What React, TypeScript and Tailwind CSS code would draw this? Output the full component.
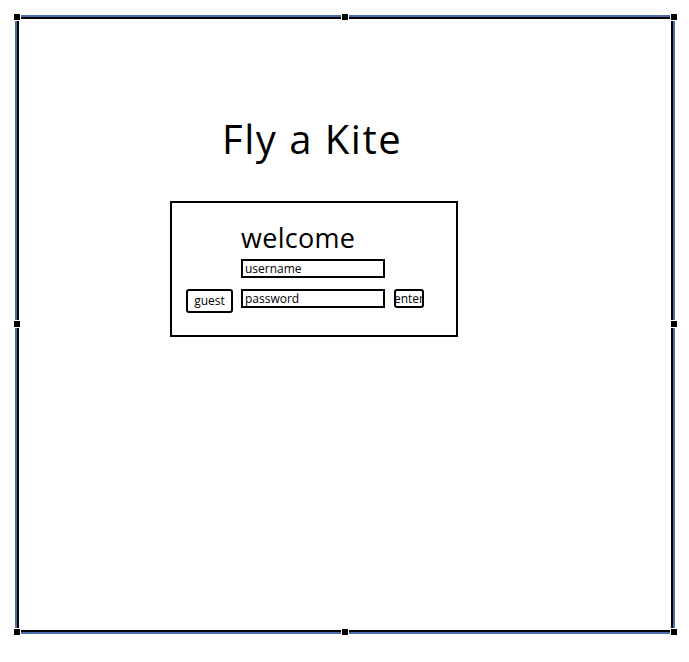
const font = { fontFamily: '"Open Sans", "Noto Sans", sans-serif' };

const Handle = ({ className }: { className: string }) => (
  <div className={`absolute h-[6px] w-[6px] bg-black ring-1 ring-white ${className}`} />
);

export default function App() {
  return (
    <div className="relative h-[662px] w-[689px] bg-white p-[17px] pb-[30px] text-black" style={font}>
      <div className="h-full w-[656px] border-2 border-black">
        <h1 className="ml-[203px] mt-[96px] h-[48px] text-[40px] leading-[48px] tracking-[1.5px]">Fly a Kite</h1>

        <div className="ml-[151px] mt-[38px] h-[136px] w-[288px] border-2 border-black pl-[14px] pt-[18px]">
          <div className="grid grid-cols-[47px_144px_31px] gap-x-[8px]">
            <div />
            <div className="h-[34px] text-[27px] leading-[34px] tracking-[0.3px]">welcome</div>
            <div />

            <div />
            <div className="mt-[4px] flex h-[19px] items-center border-2 border-black px-[2px] text-[12px] leading-none">username</div>
            <div />

            <button className="mt-[11px] flex h-[24px] items-center justify-center rounded-[3px] border-2 border-black text-[12px] leading-none">guest</button>
            <div className="mt-[11px] flex h-[19px] items-center border-2 border-black px-[2px] text-[12px] leading-none">password</div>
            <button className="ml-[1px] mt-[11px] flex h-[19px] items-center justify-center overflow-hidden rounded-[3px] border-2 border-black text-[12px] leading-none">enter</button>
          </div>
        </div>
      </div>

      {/* selection outline and handles */}
      <div className="pointer-events-none absolute left-[15px] top-[15px] h-[619px] w-[660px] border-2 border-[#4a6db0]" />
      <Handle className="left-[14px] top-[14px]" />
      <Handle className="left-[342px] top-[14px]" />
      <Handle className="left-[671px] top-[14px]" />
      <Handle className="left-[14px] top-[321px]" />
      <Handle className="left-[671px] top-[321px]" />
      <Handle className="left-[14px] top-[629px]" />
      <Handle className="left-[342px] top-[629px]" />
      <Handle className="left-[671px] top-[629px]" />
    </div>
  );
}
